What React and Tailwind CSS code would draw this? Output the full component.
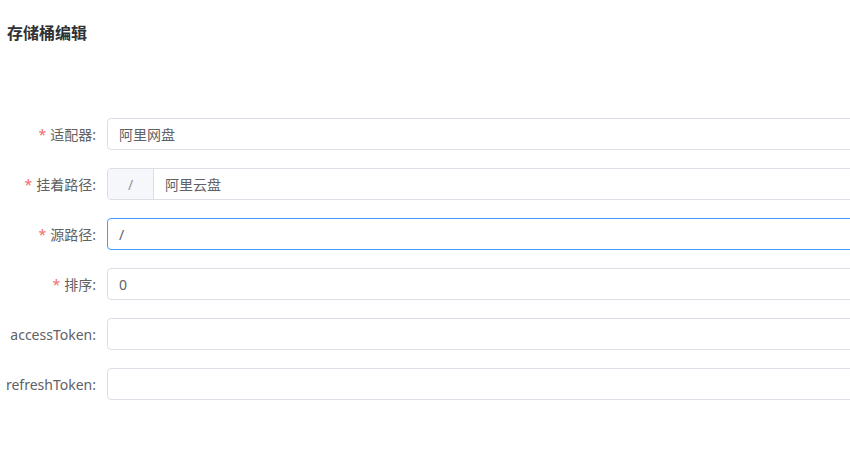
import React from 'react';

const font = { fontFamily: '"Noto Sans", "Noto Sans CJK SC", sans-serif' };

const fields = [
    { label: '适配器', required: true, value: '阿里网盘' },
    { label: '挂着路径', required: true, value: '阿里云盘', prepend: '/' },
    { label: '源路径', required: true, value: '/', focused: true },
    { label: '排序', required: true, value: '0' },
    { label: 'accessToken', required: false, value: '' },
    { label: 'refreshToken', required: false, value: '' },
];

const FormRow = ({ field }) => (
    <div className="flex items-center h-[32px]">
        <label className="w-[96px] shrink-0 text-right text-[14px] text-[#606266] whitespace-nowrap">
            {field.required && <span className="text-[#f56c6c] mr-[4px]">*</span>}
            {field.label}:
        </label>
        <div
            className={`ml-[11px] w-[760px] shrink-0 h-[32px] flex rounded-[4px] border bg-white ${
                field.focused ? 'border-[#409eff]' : 'border-[#dcdfe6]'
            }`}
        >
            {field.prepend && (
                <div className="w-[46px] shrink-0 flex items-center justify-center bg-[#f5f7fa] border-r border-[#dcdfe6] rounded-l-[4px] text-[14px] text-[#909399]">
                    {field.prepend}
                </div>
            )}
            <div className="flex-1 flex items-center px-[11px] text-[14px] text-[#606266]">
                {field.value}
            </div>
        </div>
    </div>
);

const App = () => {
    return (
        <div className="w-[850px] h-[456px] overflow-hidden bg-white" style={font}>
            <h1 className="pl-[7px] pt-[22px] text-[16px] font-bold text-[#303133] leading-[22px]">存储桶编辑</h1>
            <div className="mt-[74px] flex flex-col gap-[18px]">
                {fields.map(f => (
                    <FormRow key={f.label} field={f} />
                ))}
            </div>
        </div>
    );
};

export default App;
